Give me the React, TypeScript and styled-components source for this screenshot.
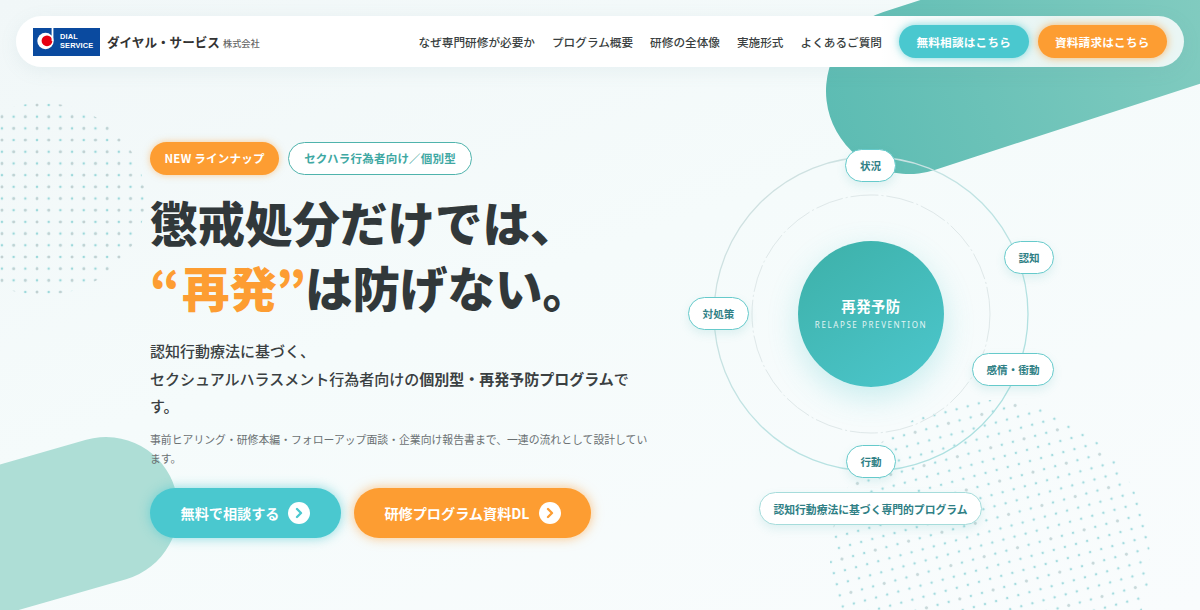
import styled, { createGlobalStyle } from "styled-components";
import { ChevronRight } from "lucide-react";

const GlobalStyle = createGlobalStyle`
    html, body {
        margin: 0;
        padding: 0;
    }

    body {
        font-family: "Noto Sans CJK JP", "Noto Sans", sans-serif;
        color: #31383a;
    }
`;

const Page = styled.div`
    position: relative;
    width: 1200px;
    height: 610px;
    overflow: hidden;
    background: linear-gradient(160deg, #f1f7f8 0%, #f5fbfb 45%, #f9fcfd 100%);
`;

const TopBlob = styled.div`
    position: absolute;
    left: 826px;
    top: 8px;
    width: 620px;
    height: 166px;
    border-radius: 83px;
    transform-origin: 83px 83px;
    transform: rotate(-18deg);
    background: linear-gradient(90deg, #5dbcb3 0%, #85cdc1 70%);
`;

const BottomBlob = styled.div`
    position: absolute;
    left: -222px;
    top: 437px;
    width: 400px;
    height: 145px;
    border-radius: 72px;
    transform-origin: 328px 72px;
    transform: rotate(-16deg);
    background: #aeded6;
`;

const DotsLeft = styled.div`
    position: absolute;
    left: -60px;
    top: 103px;
    width: 205px;
    height: 192px;
    border-radius: 50%;
    background-image:
        radial-gradient(circle, #c6cfd0 1.2px, transparent 1.6px),
        radial-gradient(circle, #c6cfd0 1.2px, transparent 1.6px),
        radial-gradient(circle, #9cd8da 1.2px, transparent 1.6px);
    background-size: 23.4px 23.4px, 23.4px 23.4px, 11.7px 11.7px;
    background-position: -8.2px -9.7px, 3.5px 2px, -2.35px -3.85px;
`;

const DotsRight = styled.div`
    position: absolute;
    left: 830px;
    top: 400px;
    width: 320px;
    height: 320px;
    border-radius: 50%;
    transform: rotate(-15deg);
    background-image:
        radial-gradient(circle, #cdd7d8 1px, transparent 1.5px),
        radial-gradient(circle, #a6dcdf 1.1px, transparent 1.6px);
    background-size: 34.5px 34.5px, 11.5px 11.5px;
`;

const Header = styled.header`
    position: relative;
    margin: 16px 16px 0;
    height: 51px;
    padding: 0 17px;
    box-sizing: border-box;
    display: flex;
    align-items: center;
    justify-content: space-between;
    border-radius: 26px;
    background: linear-gradient(90deg, #fff 0%, #fff 74%, rgba(255, 255, 255, 0.84) 88%);
    box-shadow: 0 4px 18px rgba(120, 160, 170, 0.1);
`;

const Brand = styled.a`
    display: flex;
    align-items: center;
    gap: 7px;
`;

const LogoBox = styled.div`
    width: 67px;
    height: 28px;
    background: #0a4a9f;
    display: flex;
    align-items: center;
    gap: 2px;
    padding-left: 3px;
    box-sizing: border-box;
`;

const LogoText = styled.div`
    font-family: "Liberation Sans", sans-serif;
    font-size: 7.4px;
    line-height: 8.4px;
    font-weight: 700;
    letter-spacing: 0.02em;
    color: #fff;
`;

const BrandName = styled.span`
    font-size: 12.6px;
    font-weight: 700;
    color: #333;
    small {
        margin-left: 3px;
        font-size: 9.2px;
        font-weight: 500;
        color: #666;
    }
`;

const Nav = styled.nav`
    display: flex;
    align-items: center;
`;

const NavLink = styled.a`
    font-size: 11.65px;
    font-weight: 500;
    color: #3a3f41;
    margin-right: 17px;
`;

const HeaderButton = styled.a<{ $tone: "teal" | "orange" }>`
    width: 129.5px;
    height: 33px;
    display: flex;
    align-items: center;
    justify-content: center;
    border-radius: 17px;
    font-size: 11.6px;
    font-weight: 700;
    letter-spacing: 0.02em;
    color: #fff;
    background: ${p => (p.$tone === "teal" ? "#4ac8cf" : "#fd9d32")};
    box-shadow: 0 0 8px ${p => (p.$tone === "teal" ? "rgba(74, 200, 207, 0.7)" : "rgba(253, 157, 50, 0.7)")};
    & + & {
        margin-left: 9px;
    }
`;

const Main = styled.main`
    position: relative;
    display: flex;
    gap: 20px;
    padding: 75px 0 0 150px;
`;

const Hero = styled.section`
    width: 498px;
`;

const Badges = styled.div`
    display: flex;
    gap: 9px;
`;

const Badge = styled.span<{ $outline?: boolean }>`
    height: 33px;
    display: flex;
    align-items: center;
    padding: ${p => (p.$outline ? "0 15px 1px" : "0 14.5px 1px")};
    box-sizing: border-box;
    border-radius: 17px;
    font-size: 11.5px;
    font-weight: 700;
    letter-spacing: 0.02em;
    color: ${p => (p.$outline ? "#3fa8a3" : "#fff")};
    background: ${p => (p.$outline ? "#fff" : "#fd9d32")};
    border: ${p => (p.$outline ? "1.5px solid #4fb3ac" : "none")};
    box-shadow: ${p => (p.$outline ? "none" : "0 0 7px rgba(253, 157, 50, 0.5)")};
`;

const Title = styled.h1`
    margin: 14px 0 0;
    font-size: 47.5px;
    line-height: 65px;
    font-weight: 900;
    color: #31383a;
    white-space: nowrap;
`;

const Accent = styled.em`
    font-style: normal;
    color: #fd9d32;
`;

const Quote = styled.span<{ $open?: boolean }>`
    margin: ${p => (p.$open ? "0 2px 0 0" : "0 -1px 0 -1px")};
`;

const Lead = styled.p`
    margin: 18px 0 0;
    font-size: 15px;
    line-height: 27.5px;
    font-weight: 500;
    color: #3a4042;
    strong {
        font-weight: 700;
    }
`;

const Note = styled.p`
    margin: 10px 0 0;
    font-size: 10.85px;
    line-height: 19px;
    color: #6a7072;
`;

const Actions = styled.div`
    display: flex;
    gap: 13px;
    margin-top: 20px;
`;

const ActionButton = styled.a<{ $tone: "teal" | "orange"; $width: number }>`
    width: ${p => p.$width}px;
    height: 50px;
    display: flex;
    align-items: center;
    justify-content: center;
    gap: 9px;
    border-radius: 25px;
    font-size: 14.15px;
    font-weight: 700;
    color: #fff;
    background: ${p => (p.$tone === "teal" ? "#4ac8cf" : "#fd9d32")};
    box-shadow: 0 0 12px ${p => (p.$tone === "teal" ? "rgba(74, 200, 207, 0.65)" : "rgba(253, 157, 50, 0.6)")};
`;

const ArrowCircle = styled.span<{ $tone: "teal" | "orange" }>`
    width: 22px;
    height: 22px;
    border-radius: 50%;
    background: #fff;
    display: flex;
    align-items: center;
    justify-content: center;
    color: ${p => (p.$tone === "teal" ? "#4ac8cf" : "#fd9d32")};
`;

const Diagram = styled.section`
    position: relative;
    width: 400px;
    height: 400px;
`;

const Rings = styled.svg`
    position: absolute;
    left: 0;
    top: 0;
`;

const Core = styled.div`
    position: absolute;
    left: 130px;
    top: 99px;
    width: 146px;
    height: 146px;
    padding-bottom: 2px;
    box-sizing: border-box;
    border-radius: 50%;
    display: flex;
    flex-direction: column;
    align-items: center;
    justify-content: center;
    background: linear-gradient(145deg, #3db0a8 0%, #4cc7cd 100%);
    box-shadow: 0 10px 30px rgba(76, 200, 205, 0.28);
    color: #fff;
`;

const CoreTitle = styled.div`
    font-size: 14.4px;
    line-height: 20px;
    font-weight: 700;
    letter-spacing: 0.03em;
`;

const CoreSub = styled.div`
    margin-top: 3px;
    font-family: "Noto Sans", sans-serif;
    font-size: 8px;
    line-height: 12px;
    letter-spacing: 0.2em;
    opacity: 0.85;
    white-space: nowrap;
`;

const Node = styled.div<{ $x: number; $y: number; $w: number }>`
    position: absolute;
    left: ${p => p.$x}px;
    top: ${p => p.$y}px;
    width: ${p => p.$w}px;
    height: 33px;
    box-sizing: border-box;
    display: flex;
    align-items: center;
    justify-content: center;
    border-radius: 16.5px;
    border: 1.6px solid #66cacb;
    background: #fff;
    font-size: 10.6px;
    font-weight: 700;
    color: #2f7f85;
    box-shadow: 0 4px 10px rgba(70, 180, 180, 0.14);
`;

const Caption = styled(Node)`
    border: 1px solid #a6dcdb;
    font-size: 10.8px;
`;

const nodes = [
    { label: "状況", x: 177, y: 7, w: 51 },
    { label: "認知", x: 336, y: 99, w: 50 },
    { label: "感情・衝動", x: 304, y: 211, w: 82 },
    { label: "行動", x: 178, y: 303, w: 50 },
    { label: "対処策", x: 20, y: 155, w: 61 },
];

export default function App() {
    return (
        <Page>
            <GlobalStyle />
            <TopBlob />
            <BottomBlob />
            <DotsLeft />
            <DotsRight />
            <Header>
                <Brand>
                    <LogoBox>
                        <svg width={22} height={28} viewBox="0 0 22 28">
                            <circle cx={9.5} cy={13} r={8.2} fill="#fff" />
                            <circle cx={11} cy={12.8} r={5.4} fill="#e60012" />
                            <rect x={15.6} y={0} width={1.8} height={13} fill="#fff" />
                        </svg>
                        <LogoText>DIAL<br />SERVICE</LogoText>
                    </LogoBox>
                    <BrandName>ダイヤル・サービス<small>株式会社</small></BrandName>
                </Brand>
                <Nav>
                    <NavLink>なぜ専門研修が必要か</NavLink>
                    <NavLink>プログラム概要</NavLink>
                    <NavLink>研修の全体像</NavLink>
                    <NavLink>実施形式</NavLink>
                    <NavLink>よくあるご質問</NavLink>
                    <HeaderButton $tone="teal">無料相談はこちら</HeaderButton>
                    <HeaderButton $tone="orange">資料請求はこちら</HeaderButton>
                </Nav>
            </Header>
            <Main>
                <Hero>
                    <Badges>
                        <Badge>NEW ラインナップ</Badge>
                        <Badge $outline>セクハラ行為者向け／個別型</Badge>
                    </Badges>
                    <Title>
                        懲戒処分だけでは、<br />
                        <Accent><Quote $open>“</Quote>再発<Quote>”</Quote></Accent>は防げない。
                    </Title>
                    <Lead>
                        認知行動療法に基づく、<br />
                        セクシュアルハラスメント行為者向けの<strong>個別型・再発予防プログラム</strong>です。
                    </Lead>
                    <Note>事前ヒアリング・研修本編・フォローアップ面談・企業向け報告書まで、一連の流れとして設計しています。</Note>
                    <Actions>
                        <ActionButton $tone="teal" $width={191}>
                            無料で相談する
                            <ArrowCircle $tone="teal"><ChevronRight size={16} strokeWidth={3.5} /></ArrowCircle>
                        </ActionButton>
                        <ActionButton $tone="orange" $width={237}>
                            研修プログラム資料DL
                            <ArrowCircle $tone="orange"><ChevronRight size={16} strokeWidth={3.5} /></ArrowCircle>
                        </ActionButton>
                    </Actions>
                </Hero>
                <Diagram>
                    <Rings width={400} height={400} viewBox="0 0 400 400">
                        <defs>
                            <linearGradient id="ring" x1="0" y1="0" x2="1" y2="1">
                                <stop offset="0" stopColor="#d6e0e0" />
                                <stop offset="0.5" stopColor="#bfe3e3" />
                                <stop offset="1" stopColor="#a6dfdf" />
                            </linearGradient>
                        </defs>
                        <circle cx={203} cy={172} r={157} fill="none" stroke="url(#ring)" strokeWidth={1.3} />
                        <circle cx={203} cy={172} r={119} fill="none" stroke="#dfe8e9" strokeWidth={1} strokeDasharray="28 3 2 3" />
                    </Rings>
                    <Core>
                        <CoreTitle>再発予防</CoreTitle>
                        <CoreSub>RELAPSE PREVENTION</CoreSub>
                    </Core>
                    {nodes.map(node => (
                        <Node key={node.label} $x={node.x} $y={node.y} $w={node.w}>{node.label}</Node>
                    ))}
                    <Caption $x={91} $y={350} $w={223}>認知行動療法に基づく専門的プログラム</Caption>
                </Diagram>
            </Main>
        </Page>
    );
}
